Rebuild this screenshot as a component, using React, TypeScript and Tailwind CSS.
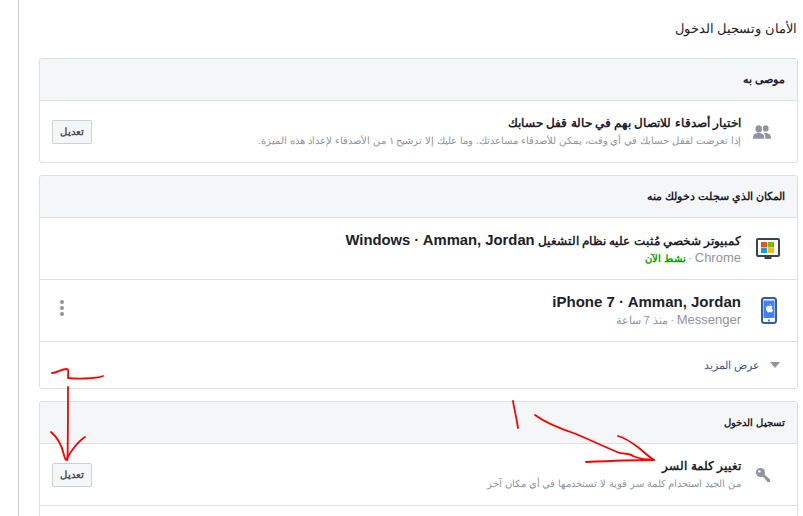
import React from "react";

const Edit = () => (
  <button className="w-[40px] h-[24px] shrink-0 rounded-[2px] border border-[#ced0d4] bg-[#f5f6f7] text-[10.2px] font-bold text-[#4b4f56] flex items-center justify-center">تعديل</button>
);

const Header = ({ children }: { children: React.ReactNode }) => (
  <div className="h-[42px] bg-[#f5f6f7] border-b border-[#dddfe2] flex items-center px-[12px] text-[10.2px] font-bold text-[#1d2129] rounded-t-[3px]">{children}</div>
);

const Row = ({ icon, title, sub, left, h = "h-[62px]", border = true }: { icon: React.ReactNode; title: React.ReactNode; sub: React.ReactNode; left?: React.ReactNode; h?: string; border?: boolean }) => (
  <div className={`${h} flex items-center px-[12px] ${border ? "border-b border-[#dddfe2]" : ""}`}>
    <div className="w-[32px] shrink-0 flex items-center justify-center">{icon}</div>
    <div className="flex-1 min-w-0 pr-[12px]">
      <div className="h-[18px] leading-[18px] text-[11.8px] font-bold text-[#1d2129] whitespace-nowrap">{title}</div>
      <div className="h-[18px] leading-[18px] text-[10.2px] text-[#90949c] whitespace-nowrap">{sub}</div>
    </div>
    <div className="shrink-0">{left}</div>
  </div>
);

const Monitor = () => (
  <svg width="24" height="22" viewBox="0 0 24 22" className="mr-[2px]">
    <rect x="1" y="1" width="22" height="17" rx="1" fill="#fff" stroke="#3a4150" strokeWidth="2" />
    <rect x="8.500" y="19" width="7" height="2" fill="#3a4150" />
    <rect x="5" y="4" width="6" height="5.500" fill="#f25022" />
    <rect x="12" y="4" width="6" height="5.500" fill="#7fba00" />
    <rect x="5" y="10" width="6" height="5" fill="#00a4ef" />
    <rect x="12" y="10" width="6" height="5" fill="#ffb900" />
  </svg>
);

const Phone = () => (
  <svg width="16" height="27" viewBox="0 0 16 27">
    <rect x="1" y="1" width="14" height="25" rx="2.500" fill="#fff" stroke="#3b5a9a" strokeWidth="2" />
    <rect x="2.500" y="3.500" width="11" height="17.500" fill="#4080ff" />
    <path d="M8.200 8.300c.4-.9 1-1.300 1.600-1.400 0 .8-.6 1.500-1.600 1.400zM10.800 11.200c0-1 .7-1.400.9-1.600-.5-.7-1.200-.8-1.500-.8-.6 0-1.100.4-1.500.4s-.9-.4-1.500-.4c-1.100 0-2.200 1-2.200 2.700 0 1.800 1.300 3.900 2.300 3.900.5 0 .8-.4 1.400-.4s.9.4 1.400.4c.9 0 1.700-1.500 2-2.400-.8-.3-1.300-1-1.300-1.800z" fill="#fff" />
    <rect x="7" y="22.500" width="2" height="2" fill="#4080ff" />
  </svg>
);

const People = () => (
  <svg width="19" height="14" viewBox="0 0 19 14" fill="#90949c" className="mr-[14px]">
    <ellipse cx="6" cy="3.800" rx="3.400" ry="3.800" />
    <path d="M0 14c0-3.500.6-4.500 2.500-5.200L4.500 8h3l2 .8c1.900.7 2.500 1.700 2.500 5.200z" />
    <ellipse cx="13.500" cy="3.300" rx="3" ry="3.300" />
    <path d="M13.200 14H19c0-3.300-.5-4.400-2.200-5l-2-.9h-2.300l-.9.4c1 .8 1.300 2.500 1.600 5.500z" />
  </svg>
);

const Key = () => (
  <svg width="14" height="14" viewBox="0 0 14 14" fill="#90949c" className="mr-[12px]">
    <circle cx="4.500" cy="4.500" r="4.500" />
    <circle cx="3.400" cy="3.400" r="1.200" fill="#fff" />
    <path d="M6 8 8 6l6 5.500V14h-3v-1.500H9.500V11z" />
  </svg>
);

const Latin = ({ children }: { children: React.ReactNode }) => <span className="text-[14.800px]">{children}</span>;
const LatinSub = ({ children }: { children: React.ReactNode }) => <span className="text-[13px]">{children}</span>;

export default function App() {
  return (
    <div dir="rtl" className="relative w-[803px] h-[516px] overflow-hidden bg-white font-['Liberation_Sans','Noto_Sans',sans-serif]">
      <div className="absolute left-[18px] top-0 bottom-0 w-[1px] bg-[#ccc]" />
      <div className="w-[759px] mr-[5px]">
        <h1 className="h-[58px] pt-[19px] pr-[1px] text-[13.3px] leading-[20px] font-normal text-[#1d2129]">الأمان وتسجيل الدخول</h1>
        <section className="border border-[#dddfe2] rounded-[3px] mb-[12px]">
          <Header><span className="text-[11.300px]">موصى به</span></Header>
          <Row h="h-[61px]" border={false} icon={<People />} title="اختيار أصدقاء للاتصال بهم في حالة قفل حسابك" sub={<span className="text-[10.450px]">إذا تعرضت لقفل حسابك في أي وقت، يمكن للأصدقاء مساعدتك. وما عليك إلا ترشيح ١ من الأصدقاء لإعداد هذه الميزة.</span>} left={<Edit />} />
        </section>
        <section className="border border-[#dddfe2] rounded-[3px] mb-[12px]">
          <Header><span className="text-[10.500px]">المكان الذي سجلت دخولك منه</span></Header>
          <Row icon={<Monitor />} title={<span className="text-[11.600px]">كمبيوتر شخصي مُثبت عليه نظام التشغيل <Latin>Windows · Amman, Jordan</Latin></span>} sub={<><LatinSub>Chrome</LatinSub> · <span className="text-[#00a400] font-bold">نشط الآن</span></>} />
          <Row icon={<Phone />} title={<span className="text-[15px]" dir="ltr">iPhone 7 · Amman, Jordan</span>} sub={<><LatinSub>Messenger</LatinSub> · <span className="text-[10.800px]">منذ 7 ساعة</span></>} left={<div className="w-[20px] flex flex-col items-center gap-[2px] mb-[5px]"><i className="w-[4px] h-[4px] rounded-full bg-[#90949c]" /><i className="w-[4px] h-[4px] rounded-full bg-[#90949c]" /><i className="w-[4px] h-[4px] rounded-full bg-[#90949c]" /></div>} />
          <div className="h-[46px] flex items-center pr-[17px] gap-[10px] text-[11px] text-[#365899]">
            <svg width="10" height="6" viewBox="0 0 10 6"><path d="M0 0h10L5 6z" fill="#90949c" /></svg>
            <span>عرض المزيد</span>
          </div>
        </section>
        <section className="border border-[#dddfe2] rounded-[3px]">
          <Header>تسجيل الدخول</Header>
          <Row icon={<Key />} title="تغيير كلمة السر" sub="من الجيد استخدام كلمة سر قوية لا تستخدمها في أي مكان آخر" left={<Edit />} />
          <div className="h-[30px]" />
        </section>
      </div>
      <svg className="absolute left-0 top-0 pointer-events-none" width="803" height="516" fill="none" stroke="#f00" strokeWidth="1.800" strokeLinecap="round" strokeLinejoin="round">
        <path d="M52 373c5 0 9-4 15-4 2 0 1 5 1 9 8 1 28 1 35-2" />
        <path d="M68 387c0 25 0 50-.500 73" />
        <path d="M51 432c6 5 11 14 13 23 1 3 1 5 2 5 5-9 11-18 19-23" />
        <path d="M513 401c1 7 3 14 5 27" />
        <path d="M535 415c12 9 26 14 41 19 14 6 27 12 41 18 6 3 11 0 16 4 8 4 14 3 21 4-22 0-47 1-68 2" />
        <path d="M618 436c8 2 17 9 21 12 6 5 10 9 15 12" />
      </svg>
    </div>
  );
}
